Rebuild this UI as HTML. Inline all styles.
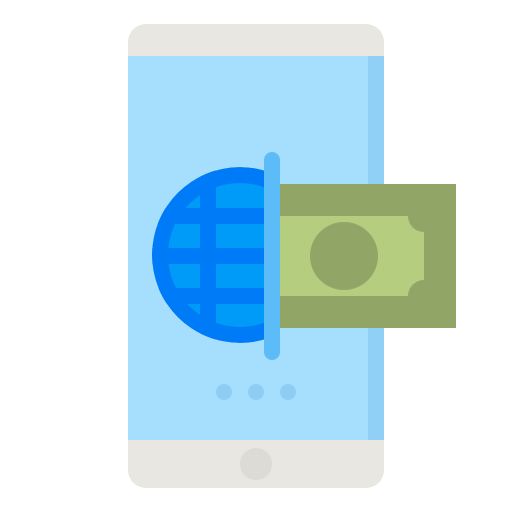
<!DOCTYPE html>
<html><head><meta charset="utf-8"><style>html,body{margin:0;padding:0;background:#fff;width:512px;height:512px;overflow:hidden}</style></head>
<body>
<svg width="512" height="512" viewBox="0 0 512 512" xmlns="http://www.w3.org/2000/svg">
<defs>
<clipPath id="gc"><rect x="140" y="150" width="128" height="220"/></clipPath>
<clipPath id="cc"><circle cx="240" cy="255" r="88"/></clipPath>
</defs>
<rect x="128" y="24" width="256" height="464" rx="18" fill="#e8e7e2"/>
<rect x="128" y="56" width="256" height="384" fill="#a6defd"/>
<rect x="368" y="56" width="16" height="384" fill="#90cff6"/>
<circle cx="256" cy="464" r="16" fill="#dcdbd6"/>
<circle cx="224" cy="392" r="8" fill="#8fcdf5"/>
<circle cx="256" cy="392" r="8" fill="#8fcdf5"/>
<circle cx="288" cy="392" r="8" fill="#8fcdf5"/>
<g clip-path="url(#gc)">
<g clip-path="url(#cc)">
<circle cx="240" cy="255" r="88" fill="#007bf8"/>
<circle cx="240" cy="255" r="72" fill="#009bf8"/>
<rect x="140" y="208" width="140" height="16" fill="#007bf8"/>
<rect x="140" y="248" width="140" height="16" fill="#007bf8"/>
<rect x="140" y="288" width="140" height="16" fill="#007bf8"/>
<rect x="200" y="160" width="16" height="200" fill="#007bf8"/>
</g>
</g>
<rect x="280" y="184" width="176" height="144" fill="#91a567"/>
<rect x="280" y="216" width="144" height="80" fill="#b5cd7f"/>
<circle cx="424" cy="216" r="16" fill="#91a567"/>
<circle cx="424" cy="296" r="16" fill="#91a567"/>
<circle cx="344" cy="256" r="34" fill="#91a567"/>
<rect x="264" y="152" width="16" height="208" rx="8" fill="#5bbcf8"/>
</svg>
</body></html>
